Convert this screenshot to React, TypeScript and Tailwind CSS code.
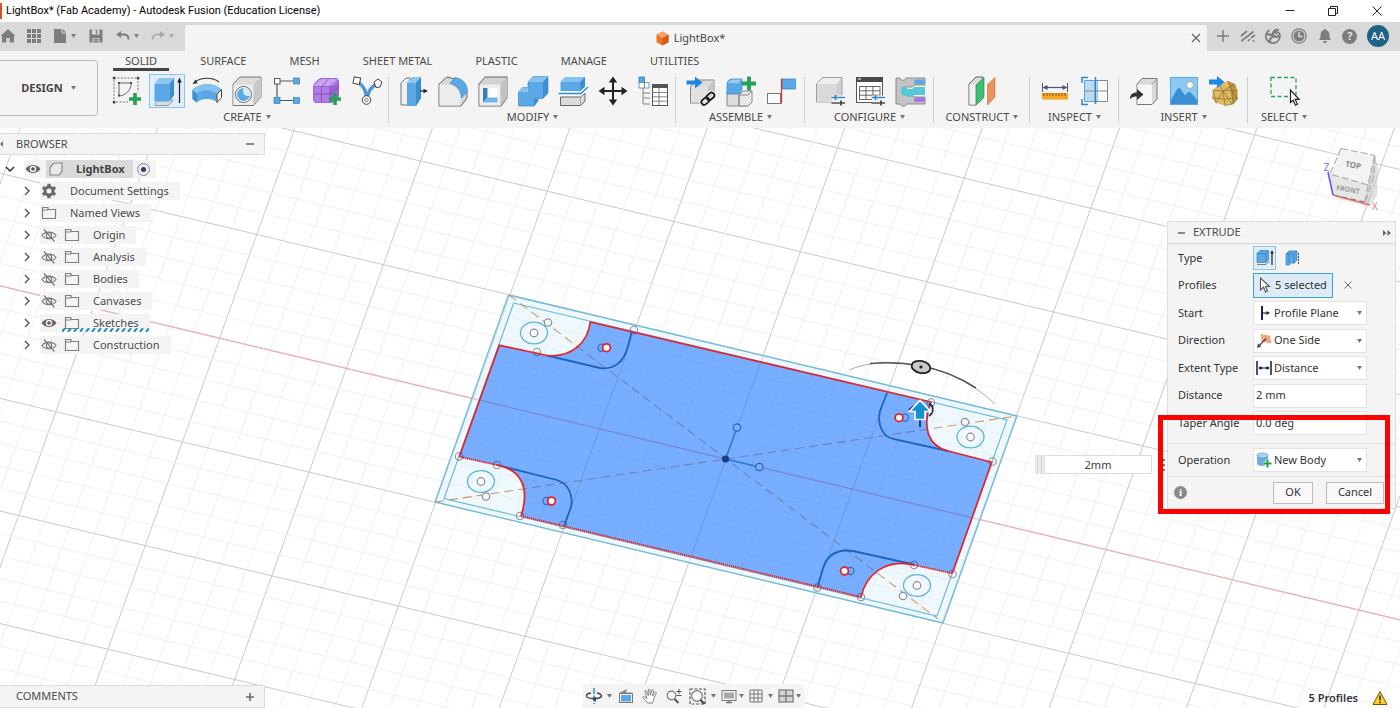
import type { ReactNode } from "react";

const BLUE = "#5aa9e6";
const BLUE_DARK = "#2f7fc0";
const LINE = "#6b6b6b";

function Caret({ className = "" }: { className?: string }) {
  return (
    <svg viewBox="0 0 5 4" className={`h-1 w-[5px] shrink-0 ${className}`} fill="currentColor" aria-hidden="true">
      <path d="M0 0h5L2.500 4z" />
    </svg>
  );
}

function Icon({ children, size = "h-8 w-8", box = "0 0 32 32" }: { children: ReactNode; size?: string; box?: string }) {
  return (
    <svg viewBox={box} className={`${size} shrink-0`} fill="none" aria-hidden="true">
      {children}
    </svg>
  );
}

/* ---------- ribbon icons ---------- */

const GreenPlus = ({ x, y }: { x: number; y: number }) => (
  <path d={`M${x - 6} ${y}h12M${x} ${y - 6}v12`} stroke="#23a455" strokeWidth="3.6" />
);

const SketchIcon = () => (
  <Icon>
    <g stroke="#666" strokeWidth=".9" strokeDasharray="2 1.4">
      <path d="M3 3h24v24H3z" />
    </g>
    <g fill="#444">
      <rect x="1.800" y="1.800" width="2.500" height="2.500" />
      <rect x="25.800" y="1.800" width="2.500" height="2.500" />
      <rect x="1.800" y="26" width="2.500" height="2.500" />
      <rect x="7" y="7" width="2" height="2" />
      <rect x="19" y="7" width="2" height="2" />
      <rect x="7" y="19.500" width="2" height="2" />
    </g>
    <path d="M8 8h12.500M8 8v13M20.500 8C20 15 15 20.500 8 21" stroke="#555" strokeWidth=".9" />
    <path d="M18 17h12v13H18z" fill="#f4f4f4" />
    <GreenPlus x={24} y={24} />
  </Icon>
);

const ExtrudeIcon = () => (
  <Icon>
    <path d="M4 29l4-4h14l-1 2-4 3.500H4z" fill="#ddd" stroke="#888" strokeWidth=".8" />
    <path d="M4 8.500L8.500 3H23v18l-4.500 6.500H4z" fill="#bfe0f6" />
    <path d="M3.500 9h15v17.500h-15z" fill={BLUE} />
    <path d="M3.500 9L8 3h15l-4.500 6z" fill="#8ac6f2" />
    <path d="M18.500 9L23 3v17l-4.500 6.500z" fill="#3c8ed2" />
    <path d="M28.500 28V5" stroke="#222" strokeWidth="1.200" />
    <path d="M28.500 2.500l2.200 5h-4.400z" fill="#222" />
  </Icon>
);

const RevolveIcon = () => (
  <Icon>
    <path d="M4 7C10 2 22 2 28 7" stroke="#333" strokeWidth="1.200" />
    <path d="M1.500 9l5.200-.8L4.500 4.500z" fill="#333" />
    <path d="M1.500 15C8 7.500 24 7.500 30.500 14.500L26 18v9c-6-4-15-4-20.500.5L1.500 24z" fill={BLUE} />
    <path d="M1.500 15C8 7.500 24 7.500 30.500 14.500L26 19C20 14 11 14 6 19z" fill="#86c2f0" />
    <path d="M6 19v8.500L1.500 24v-9z" fill="#3c8ed2" />
    <path d="M26 19l4.500-4.500v8L26 27.500z" fill="#fff" stroke="#444" strokeWidth="1" />
  </Icon>
);

const HoleIcon = () => (
  <Icon>
    <path d="M2 9l7-7h21v20l-7.500 8.500H2z" fill="#dcdcdc" stroke="#777" strokeWidth="1" />
    <path d="M2.500 9.500h20v20.500h-20z" fill="#ededed" />
    <path d="M22.500 9.500L30 2v20l-7.500 8z" fill="#c8c8c8" />
    <circle cx="12.500" cy="19.500" r="8" fill="#fff" stroke="#666" />
    <circle cx="12.500" cy="19.500" r="6.500" fill={BLUE} />
    <path d="M12.500 13a6.500 6.500 0 0 1 6.300 8c-5 .8-8-2.500-6.300-8z" fill="#d9edfb" />
  </Icon>
);

const PatternIcon = () => (
  <Icon>
    <path d="M9 6h13M6 9v13M9 25.500h13" stroke="#555" strokeWidth="1.200" />
    <rect x="3.500" y="3.500" width="5.500" height="5.500" fill="#fff" stroke="#555" />
    <rect x="22.500" y="3" width="6" height="6" fill={BLUE} stroke={BLUE_DARK} strokeWidth=".7" />
    <rect x="3" y="22.500" width="6" height="6" fill={BLUE} stroke={BLUE_DARK} strokeWidth=".7" />
    <rect x="22.500" y="22.500" width="6" height="6" fill={BLUE} stroke={BLUE_DARK} strokeWidth=".7" />
  </Icon>
);

const FormIcon = () => (
  <Icon>
    <path d="M2 12c0-3 5-9 9-9h14c2 0 3 2 3 4v13c0 3-5 8-8 8H5c-2 0-3-2-3-4z" fill="#9d63d8" />
    <path d="M3 11c1-3 5-7 9-7h13c2 0 2 1 1 3-2 2-4 4-7 4z" fill="#c9a2f0" />
    <path d="M3 12h16v15H5c-2 0-2-2-2-3z" fill="#b07ce6" />
    <path d="M10.500 12v15M3 19h16M19 12v15M19 19l9-7M19 11l8-6M10.500 12l7-8" stroke="#7d4bb5" strokeWidth=".8" />
    <GreenPlus x={24} y={24} />
  </Icon>
);

const PipeIcon = () => (
  <Icon>
    <path d="M6 6c6 5 9 8 9.500 18M27 8c-7 4-10 8-11 16" stroke="#4b97d6" strokeWidth="3.400" />
    <rect x="2.500" y="2.500" width="6.500" height="6.500" fill="#fff" stroke="#444" transform="rotate(12 6 6)" />
    <path d="M23 7l4-3 4 3-2 5-4 .5z" fill="#fff" stroke="#444" />
    <circle cx="15.500" cy="25" r="4.300" fill="#fff" stroke="#444" />
    <circle cx="15.500" cy="25" r="1.800" fill="#d0e6f8" stroke="#777" strokeWidth=".8" />
  </Icon>
);

const PressPullIcon = () => (
  <Icon>
    <path d="M4 8l5-5h4v25l-2 2H4z" fill="#f0f0f0" stroke="#777" />
    <path d="M10 8l5-6h9v21l-5 8h-9z" fill={BLUE} />
    <path d="M10 8l5-6h9l-5 6z" fill="#8ac6f2" />
    <path d="M19 8l5-6v21l-5 8z" fill="#3c8ed2" />
    <path d="M23 16h5" stroke="#222" strokeWidth="1.200" />
    <path d="M31 16l-4.500-2.300v4.600z" fill="#222" />
  </Icon>
);

const FilletIcon = () => (
  <Icon>
    <path d="M2 9l8-7 8 2c8 3 12 8 12 15v4l-6 8H2z" fill="#d7d7d7" stroke="#666" />
    <path d="M2.500 9.500H10c8 1 13 6 13.500 13v8H2.500z" fill="#ececec" />
    <path d="M13 8.500L18 2.500C26 4 30.500 9 30.500 17L24.500 23C24 15 20 10 13 8.500z" fill={BLUE} stroke={BLUE_DARK} strokeWidth=".6" />
  </Icon>
);

const ShellIcon = () => (
  <Icon>
    <path d="M2 9l6-7h22v21l-6 8H2z" fill="#d2d2d2" stroke="#666" />
    <path d="M2.500 9.500h21v21h-21z" fill="#efefef" />
    <path d="M23.500 9.500L30 2.500v20l-6.500 8z" fill="#c2c2c2" />
    <rect x="6" y="13" width="14.500" height="14.500" fill="#fff" />
    <path d="M6 13h4.500v9.500L6 27.500z" fill="#2f7fc0" />
    <path d="M6 27.500l4.500-5h10v5z" fill="#6db5ec" />
  </Icon>
);

const CombineIcon = () => (
  <Icon>
    <path d="M1.500 17l4-4.500H11V7l5-5.500h15V18l-5 5.500h-5V26l-4 5H1.500z" fill={BLUE} stroke={BLUE_DARK} strokeWidth=".6" />
    <path d="M11 7l5-5.500h15L26 7zM1.500 17l4-4.500H11V17z" fill="#86c2f0" />
    <path d="M26 7l5-5.500V18l-5 5.500zM17 23.500h4V26l-4 5z" fill="#3c8ed2" />
  </Icon>
);

const SplitIcon = () => (
  <Icon>
    <path d="M3.500 7L8 2h20v10l-4 4H3.500z" fill={BLUE} />
    <path d="M3.500 7L8 2h20l-4.500 5z" fill="#86c2f0" />
    <path d="M23.500 7L28 2v10l-4.500 4z" fill="#3c8ed2" />
    <path d="M3.500 22h20L28 18v8l-4.500 4.500h-20z" fill="#dcdcdc" stroke="#666" />
    <path d="M23.500 22v8.500" stroke="#999" strokeWidth=".8" />
    <path d="M2 18.500h22l7-6.500" stroke="#fff" strokeWidth="4" />
    <path d="M1.500 18.500H24l7-6.500" stroke="#2d86cf" strokeWidth="1.300" />
  </Icon>
);

const MoveIcon = () => (
  <Icon>
    <path d="M16 6v20M6 16h20" stroke="#222" strokeWidth="2" />
    <path d="M16 1.500l4.200 6h-8.400zM16 30.500l4.200-6h-8.400zM1.500 16l6-4.200v8.400zM30.500 16l-6-4.200v8.400z" fill="#222" />
  </Icon>
);

const ParametersIcon = () => (
  <Icon>
    <rect x="2" y="2" width="5.500" height="5.500" fill={BLUE} stroke={BLUE_DARK} strokeWidth=".8" />
    <path d="M2 7.500h5.500V13H2zM7.500 7.500H12V13H7.500z" fill="#fff" stroke="#5a7f9f" strokeWidth=".8" />
    <path d="M6 13v16h7M6 18h7M6 23h7" stroke="#777" strokeWidth=".9" />
    <rect x="15.500" y="9.500" width="15" height="21" fill="#fff" stroke="#555" />
    <path d="M15.500 9.500h15v3.500h-15z" fill="#555" />
    <path d="M15.500 17.500h15M15.500 21.800h15M15.500 26.200h15M22 13v17.500" stroke="#777" strokeWidth=".9" />
  </Icon>
);

const InsertLinkIcon = () => (
  <Icon>
    <path d="M5.500 12l5-7H29v15l-6 8H5.500z" fill="#dcdcdc" stroke="#888" />
    <path d="M6 12h17v15.500H6z" fill="#e2e2e2" />
    <path d="M23 12l6-7v15l-6 7.500z" fill="#c4c4c4" />
    <path d="M1.500 5.500H10V1.500L17.500 7.500 10 13.500V9.500H1.500z" fill="#1e88d8" />
    <g stroke="#f4f4f4" strokeWidth="4">
      <rect x="16" y="23.500" width="8.500" height="5.500" rx="2.700" transform="rotate(-40 20 26)" />
      <rect x="21.500" y="19" width="8.500" height="5.500" rx="2.700" transform="rotate(-40 25 22)" />
    </g>
    <g stroke="#222" strokeWidth="1.900">
      <rect x="16" y="23.500" width="8.500" height="5.500" rx="2.700" transform="rotate(-40 20 26)" />
      <rect x="21.500" y="19" width="8.500" height="5.500" rx="2.700" transform="rotate(-40 25 22)" />
    </g>
  </Icon>
);

const NewComponentIcon = () => (
  <Icon>
    <path d="M2 18h24v10l-4 3H2z" fill="#ddd" stroke="#888" />
    <path d="M14 20l4-4h9v11l-4 4h-9z" fill="#e8e8e8" stroke="#888" />
    <path d="M14 20v11M14 20h9l4-4" stroke="#888" />
    <path d="M2 9c0-3 3-5 5-5h10v11l-3 4H2z" fill={BLUE} stroke={BLUE_DARK} strokeWidth=".7" />
    <path d="M3 8c1-2 3-3.500 5-3.500h8.500L13 8.500z" fill="#9accf2" />
    <path d="M17 8.500h14M24 1.500v14" stroke="#23a455" strokeWidth="3.800" />
  </Icon>
);

const JointIcon = () => (
  <Icon>
    <rect x="2.500" y="18.500" width="13" height="10" fill="#fff" stroke="#777" />
    <rect x="17.500" y="4" width="13" height="10" fill={BLUE} stroke={BLUE_DARK} strokeWidth=".7" />
    <path d="M16.500 3.500v25" stroke="#d9362b" strokeWidth="1.300" />
  </Icon>
);

const Sliders = () => (
  <g>
    <path d="M18 20.500h13v9H18z" fill="#f4f4f4" />
    <path d="M17.500 22.500h13.500" stroke="#2d86cf" strokeWidth="1.400" />
    <path d="M21.500 20v5" stroke="#2d86cf" strokeWidth="1.800" />
    <path d="M17.500 28h13.500" stroke="#444" strokeWidth="1.400" />
    <path d="M27 25.500v5" stroke="#444" strokeWidth="1.800" />
  </g>
);

const ConfigureIcon = () => (
  <Icon>
    <path d="M2.500 9l6-6.500H28V20l-5 7H2.500z" fill="#cfcfcf" stroke="#999" strokeWidth=".9" />
    <path d="M3 9h19.500v18H3z" fill="#dadada" />
    <path d="M3 9l6-6h18.500l-5 6z" fill="#efefef" />
    <Sliders />
  </Icon>
);

const ConfigTableIcon = () => (
  <Icon>
    <rect x="2.500" y="2.500" width="26" height="25" fill="#fff" stroke="#555" />
    <path d="M2 2h27v5H2z" fill="#4a4a4a" />
    <path d="M4 4h3" stroke="#fff" />
    <path d="M5.500 11.500h20.500v13H5.500zM5.500 15.800h20.500M5.500 20.200h20.500M12 11.500v13M19 11.500v13" stroke="#555" strokeWidth=".9" />
    <Sliders />
  </Icon>
);

const RulesIcon = () => (
  <Icon>
    <path d="M2 3h4c0 3 6 3 6 0h19v7H20l-2 2H9v8h9l2 2h11v7H12c0 3-5 3-6 0H2z" fill="#c4c4c4" stroke="#777" strokeWidth=".8" />
    <path d="M7 12h5l2 2h4l2-2h11v8H20l-2 2h-4l-2-2H7z" fill="#55c8d6" />
    <rect x="20" y="4.500" width="11" height="4.500" rx="2.200" fill="#5aa9e6" />
    <rect x="20" y="22.500" width="11" height="4.500" rx="2.200" fill="#a874e0" />
  </Icon>
);

const ConstructIcon = () => (
  <Icon>
    <path d="M3 9l7-7h7v20l-7 8H3z" fill="#dcdcdc" stroke="#666" />
    <path d="M3.500 9.500h6v20h-6z" fill="#f2f2f2" />
    <path d="M10 10l8-7.500v20L10 30z" fill="#3fbf72" stroke="#2a7d4b" strokeWidth=".6" />
    <path d="M21.500 9.500l7.500-7v19.500l-7.500 8z" fill="#e8935a" stroke="#c0703b" strokeWidth=".6" />
  </Icon>
);

const MeasureIcon = () => (
  <Icon>
    <path d="M3.500 8v9M28.500 8v9" stroke="#56507a" strokeWidth="1" />
    <path d="M5 12.500h22" stroke="#56507a" strokeWidth="1.200" />
    <path d="M3.500 12.500l5-2.500v5zM28.500 12.500l-5-2.500v5z" fill="#56507a" />
    <rect x="3" y="18" width="26" height="6.500" fill="#f5a623" />
    <path d="M4.500 19.500h23" stroke="#7a4c00" strokeWidth="2.500" strokeDasharray="1 2" />
  </Icon>
);

const InterferenceIcon = () => (
  <Icon>
    <path d="M5.500 5.500h13v21h-13z" fill="#bcdcf5" stroke="#5aa0d8" />
    <path d="M16 5.500h12.500v21H16z" fill="#fff" fillOpacity=".4" stroke="#888" />
    <path d="M5.500 16h23" stroke="#888" />
    <path d="M16.500 2v27" stroke="#2d86cf" strokeWidth="1.500" />
    <path d="M3 8V2.500h6M3 24v5.500h6" stroke="#2d86cf" strokeWidth="1.500" />
  </Icon>
);

const InsertDeriveIcon = () => (
  <Icon>
    <path d="M9 9l5-5.500h15V24l-5 5.500H9z" fill="#d9d9d9" stroke="#777" />
    <path d="M9.500 9.500H24V29H9.500z" fill="#f6f6f6" />
    <path d="M24 9.500l5-6" stroke="#999" />
    <path d="M2 24c0-5 3-6.500 7-6.500V14l6.500 5.500L9 25v-3.500c-3 0-4.500.5-7 2.500z" fill="#333" />
  </Icon>
);

const CanvasImageIcon = () => (
  <Icon>
    <rect x="2.500" y="2.500" width="27" height="27" fill="#8ec9f3" stroke="#5aa9e6" />
    <path d="M3 25c4-7 6-12 8-12s5 7 6 7 2-3 4-3 5 4 8 8v4H3z" fill="#3c8ed2" />
    <circle cx="22" cy="10" r="3.500" fill="#fffbe0" stroke="#5b8f9c" strokeWidth=".6" />
  </Icon>
);

const InsertMeshIcon = () => (
  <Icon>
    <path d="M5 15l6-6 9-3 7 3 2.500 7v8L25 29l-8 1.500L8 28l-4-5z" fill="#ddbb62" />
    <path d="M20 6l7 3 2.500 7v8L25 29z" fill="#bd9842" />
    <g stroke="#8a6d2c" strokeWidth=".7">
      <path d="M5 15l10 1 12-7M5 15l3 13 7-12 2 14.500 8-1.500 4.500-5L24 15l-9 1 9 13M20 6l4 9 5.500 1M4 23l13 1 12.500-1M24 15l1 14M11 9l4 7" />
    </g>
    <path d="M1 4.500h8V1l7.500 6L9 13V9.500H1z" fill="#1e88e5" />
  </Icon>
);

const SelectIcon = () => (
  <Icon>
    <rect x="3" y="2.500" width="25" height="19" stroke="#2aa35a" strokeWidth="1.300" strokeDasharray="4 2.500" />
    <path d="M22.500 15v12.500l2.700-2.300 2.300 5 2-1-2.300-4.800h3.800z" fill="#fff" stroke="#222" strokeWidth="1.200" />
  </Icon>
);

type Tool = { name: string; icon: ReactNode; active?: boolean };
type Group = { label: string; width: string; tools: Tool[] };

const groups: Group[] = [
  {
    label: "CREATE",
    width: "w-[284px]",
    tools: [
      { name: "Create Sketch", icon: <SketchIcon /> },
      { name: "Extrude", icon: <ExtrudeIcon />, active: true },
      { name: "Revolve", icon: <RevolveIcon /> },
      { name: "Hole", icon: <HoleIcon /> },
      { name: "Pattern", icon: <PatternIcon /> },
      { name: "Create Form", icon: <FormIcon /> },
      { name: "Pipe", icon: <PipeIcon /> },
    ],
  },
  {
    label: "MODIFY",
    width: "w-[287px]",
    tools: [
      { name: "Press Pull", icon: <PressPullIcon /> },
      { name: "Fillet", icon: <FilletIcon /> },
      { name: "Shell", icon: <ShellIcon /> },
      { name: "Combine", icon: <CombineIcon /> },
      { name: "Split Body", icon: <SplitIcon /> },
      { name: "Move", icon: <MoveIcon /> },
      { name: "Change Parameters", icon: <ParametersIcon /> },
    ],
  },
  {
    label: "ASSEMBLE",
    width: "w-[129px]",
    tools: [
      { name: "Insert Component", icon: <InsertLinkIcon /> },
      { name: "New Component", icon: <NewComponentIcon /> },
      { name: "Joint", icon: <JointIcon /> },
    ],
  },
  {
    label: "CONFIGURE",
    width: "w-[129px]",
    tools: [
      { name: "Configure Design", icon: <ConfigureIcon /> },
      { name: "Configuration Table", icon: <ConfigTableIcon /> },
      { name: "Rules", icon: <RulesIcon /> },
    ],
  },
  { label: "CONSTRUCT", width: "w-[96px]", tools: [{ name: "Offset Plane", icon: <ConstructIcon /> }] },
  {
    label: "INSPECT",
    width: "w-[89px]",
    tools: [
      { name: "Measure", icon: <MeasureIcon /> },
      { name: "Interference", icon: <InterferenceIcon /> },
    ],
  },
  {
    label: "INSERT",
    width: "w-[129px]",
    tools: [
      { name: "Insert Derive", icon: <InsertDeriveIcon /> },
      { name: "Canvas", icon: <CanvasImageIcon /> },
      { name: "Insert Mesh", icon: <InsertMeshIcon /> },
    ],
  },
  { label: "SELECT", width: "w-[72px]", tools: [{ name: "Select", icon: <SelectIcon /> }] },
];

/* ---------- window chrome ---------- */

function TitleBar() {
  return (
    <header className="flex h-[22px] items-center bg-white text-black">
      <span className="h-4 w-[2px] bg-[#d9541e]" />
      <h1 className="pl-1 font-[Roboto,sans-serif] text-[11px]">LightBox* (Fab Academy) - Autodesk Fusion (Education License)</h1>
      <div className="ml-auto flex items-center">
        <button aria-label="Minimize" className="flex w-[43px] justify-center">
          <Icon size="h-3 w-3" box="0 0 12 12"><path d="M1.500 5.500h9" stroke="#222" /></Icon>
        </button>
        <button aria-label="Restore" className="flex w-[43px] justify-center">
          <Icon size="h-3 w-3" box="0 0 12 12">
            <path d="M1.500 3.500h7v7h-7z" stroke="#222" />
            <path d="M3.500 3.500v-2h7v7h-2" stroke="#222" />
          </Icon>
        </button>
        <button aria-label="Close window" className="flex w-[46px] justify-center">
          <Icon size="h-3 w-3" box="0 0 12 12"><path d="M1.500 1.500l9 9M10.500 1.500l-9 9" stroke="#222" /></Icon>
        </button>
      </div>
    </header>
  );
}

function TabStrip() {
  return (
    <div className="flex h-[29px] bg-[#d9d9d9] text-[#7d7d7d]">
      <div className="flex w-[185px] items-center pb-px">
        <button aria-label="Home" className="w-[18px] shrink-0">
          <Icon size="h-4 w-4" box="0 0 16 16"><path d="M8 1l7.500 7H14v6.500H9.700V10H6.300v4.500H2V8H.5z" fill="currentColor" /></Icon>
        </button>
        <button aria-label="Apps" className="ml-[9px] shrink-0">
          <Icon size="h-[14px] w-[14px]" box="0 0 14 14">
            <path d="M0 0h4v4H0zM5 0h4v4H5zM10 0h4v4h-4zM0 5h4v4H0zM5 5h4v4H5zM10 5h4v4h-4zM0 10h4v4H0zM5 10h4v4H5zM10 10h4v4h-4z" fill="currentColor" />
          </Icon>
        </button>
        <button aria-label="File" className="ml-3 flex shrink-0 items-center gap-1">
          <Icon size="h-[14px] w-[14px]" box="0 0 14 14"><path d="M1 0h7.500v4.500H13V14H1z" fill="currentColor" /><path d="M9.500 0L13 3.500H9.500z" fill="currentColor" /></Icon>
          <Caret />
        </button>
        <button aria-label="Save" className="ml-[13px] shrink-0">
          <Icon size="h-[14px] w-[14px]" box="0 0 14 14">
            <path d="M.5.500h13v13H.5z" fill="currentColor" />
            <path d="M3 .5h7.500V5.500H3zM3.500 9h7v4.500h-7z" fill="#d9d9d9" />
            <path d="M4.500 10.500h5M4.500 12.500h5M7.500 1.200v3.500" stroke="currentColor" strokeWidth="1.400" />
          </Icon>
        </button>
        <button aria-label="Undo" className="ml-[13px] flex shrink-0 items-center gap-1">
          <Icon size="h-[14px] w-[14px]" box="0 0 14 14"><path d="M2 5.500h6c3 0 4.500 2 4.500 5" stroke="currentColor" strokeWidth="1.800" /><path d="M0 5.500L5 2v7z" fill="currentColor" /></Icon>
          <Caret />
        </button>
        <button aria-label="Redo" className="ml-3 flex shrink-0 items-center gap-1 text-[#a8a8a8]">
          <Icon size="h-[14px] w-[14px]" box="0 0 14 14"><path d="M12 5.500H6c-3 0-4.500 2-4.500 5" stroke="currentColor" strokeWidth="1.600" /><path d="M14 5.500L9 2v7z" fill="currentColor" /></Icon>
          <Caret />
        </button>
      </div>
      <div className="relative mt-[3px] flex flex-1 items-center justify-center rounded-t-sm bg-[#f4f4f4] text-[#444]">
        <div className="flex items-center gap-1 pr-3 text-[11px]">
          <Icon size="h-[15px] w-[15px]" box="0 0 15 15">
            <path d="M7.500.5l6 3.200v7.500l-6 3.300-6-3.300V3.700z" fill="#ee7326" />
            <path d="M7.500.5l6 3.200-6 3.200-6-3.200z" fill="#f8a469" />
            <path d="M7.500 6.900l6-3.200v7.500l-6 3.300z" fill="#d45a12" />
          </Icon>
          <span>LightBox*</span>
        </div>
        <button aria-label="Close document" className="absolute right-[6px] top-2">
          <Icon size="h-[10px] w-[10px]" box="0 0 10 10"><path d="M1 1l8 8M9 1L1 9" stroke="#666" strokeWidth="1.200" /></Icon>
        </button>
      </div>
      <div className="flex w-[193px] items-center justify-between pb-px pl-[9px] pr-[11px]">
        <button aria-label="New tab"><Icon size="h-[14px] w-[14px]" box="0 0 14 14"><path d="M7 1v12M1 7h12" stroke="currentColor" strokeWidth="1.500" /></Icon></button>
        <button aria-label="Activity">
          <Icon size="h-4 w-4" box="0 0 16 16">
            <path d="M1 8l6-5M1.500 13L13.500 3.500M8 13l2-2" stroke="currentColor" strokeWidth="1.700" />
            <path d="M11 10l4-3" stroke="currentColor" strokeWidth="1.700" />
            <circle cx="13.500" cy="13" r="1" fill="currentColor" />
          </Icon>
        </button>
        <button aria-label="Extensions">
          <Icon size="h-4 w-4" box="0 0 16 16">
            <path d="M4.500 2A7 7 0 1 0 13.500 4" stroke="currentColor" strokeWidth="1.800" />
            <path d="M2 5.500c2 1.500 4 2 5.500.5C8.500 3.500 10 1.500 12.500 2L10.500 4.500l2 1.200M5 14c-.5-3 1-5 4-5.500M8 6.500c1.500 3 4 3 6.500 1" stroke="currentColor" strokeWidth="2.200" />
          </Icon>
        </button>
        <button aria-label="Job status">
          <Icon size="h-4 w-4" box="0 0 16 16">
            <circle cx="8" cy="8" r="7.200" stroke="currentColor" strokeWidth="1.200" />
            <circle cx="8" cy="8" r="5.500" fill="currentColor" />
            <path d="M8 4v4.500h3.500" stroke="#d9d9d9" strokeWidth="1.400" />
          </Icon>
        </button>
        <button aria-label="Notifications">
          <Icon size="h-4 w-4" box="0 0 16 16"><path d="M8 1c.8 0 1.200.5 1.200 1.200C12 3 12.500 5 12.500 8c0 2 .7 3 1.700 4H1.800c1-1 1.700-2 1.700-4 0-3 .5-5 3.300-5.800C6.800 1.500 7.200 1 8 1zM6 13h4c0 1.300-.8 2-2 2s-2-.7-2-2z" fill="currentColor" /></Icon>
        </button>
        <button aria-label="Help" className="flex h-[15px] w-[15px] items-center justify-center rounded-full bg-[#7d7d7d] text-[11px] font-bold text-[#e4e4e4]">?</button>
        <button aria-label="Account" className="flex h-[22px] w-[22px] items-center justify-center rounded-full bg-[#1f6288] text-[11px] text-white">AA</button>
      </div>
    </div>
  );
}

const workspaceTabs = ["SOLID", "SURFACE", "MESH", "SHEET METAL", "PLASTIC", "MANAGE", "UTILITIES"];

function Ribbon() {
  return (
    <div className="flex h-[77px] bg-[#f4f4f4] text-[#4a4a4a]">
      <button className="mt-[9px] flex h-[56px] w-[98px] items-center justify-center gap-2 rounded-r border border-l-0 border-[#bdbdbd] text-[11px] font-bold text-[#444]">
        DESIGN <Caret className="text-[#777]" />
      </button>
      <div className="flex min-w-0 flex-1 flex-col pl-[7px]">
        <nav className="flex h-5 gap-[19px] pl-2">
          {workspaceTabs.map((tab, i) => (
            <button
              key={tab}
              className={`flex h-5 items-center whitespace-nowrap px-3 text-[11px] ${i === 0 ? "border-b-[3px] border-[#444] pt-[3px]" : ""}`}
            >
              {tab}
            </button>
          ))}
        </nav>
        <div className="flex pt-0.5">
          {groups.map((group, i) => (
            <section key={group.label} className={`relative flex shrink-0 flex-col items-center ${group.width}`}>
              <div className="flex">
                {group.tools.map((tool) => (
                  <button
                    key={tool.name}
                    aria-label={tool.name}
                    className="flex h-9 w-10 items-center justify-center"
                  >
                    <span className={tool.active ? "-m-px border border-[#8cc4ea] bg-[#dfeefa] px-px" : ""}>{tool.icon}</span>
                  </button>
                ))}
              </div>
              <button className="flex items-center gap-1 whitespace-nowrap text-[11px] leading-4">
                {group.label} <Caret className="text-[#777]" />
              </button>
              {i < groups.length - 1 && <span className="absolute right-0 top-1 h-[46px] w-px bg-[#cfcfcf]" />}
            </section>
          ))}
        </div>
      </div>
    </div>
  );
}

/* ---------- browser tree ---------- */

const EyeIcon = ({ off = false }: { off?: boolean }) =>
  off ? (
    <Icon size="h-4 w-4" box="0 0 16 16">
      <path d="M1 8.500C4 4 12 4 15 8.500 12 12.800 4 12.800 1 8.500z" stroke="#777" strokeWidth="1.100" />
      <circle cx="8" cy="8.500" r="2.700" stroke="#777" strokeWidth="1.100" />
      <path d="M3 2.500l10.500 12" stroke="#777" strokeWidth="1.200" />
    </Icon>
  ) : (
    <Icon size="h-4 w-4" box="0 0 16 16">
      <path d="M.5 8C4 2.500 12 2.500 15.500 8 12 13.500 4 13.500.5 8z" fill="#666" />
      <circle cx="8" cy="8" r="3.200" fill="#f4f4f4" />
      <circle cx="8" cy="8" r="1.800" fill="#555" />
    </Icon>
  );

const FolderIcon = () => (
  <Icon size="h-4 w-4" box="0 0 16 16">
    <path d="M1.500 13.500v-11h5.500v2h7.500v9z" stroke="#808080" strokeWidth="1.200" />
    <path d="M2 5h5V4" stroke="#808080" />
  </Icon>
);

const GearIcon = () => (
  <Icon size="h-4 w-4" box="0 0 16 16">
    <circle cx="8" cy="8" r="4" stroke="#6b6b6b" strokeWidth="3" />
    <g stroke="#6b6b6b" strokeWidth="3.400">
      <path d="M8 .8v3M8 12.200v3M1.700 4.400l2.600 1.500M11.700 10.100l2.600 1.500M1.700 11.600l2.600-1.500M11.700 5.900l2.600-1.500" />
    </g>
  </Icon>
);

const Chevron = () => (
  <Icon size="h-[10px] w-[10px]" box="0 0 10 10"><path d="M3 1l4 4-4 4" stroke="#555" strokeWidth="1.400" /></Icon>
);

type Node = { label: string; kind: "settings" | "views" | "folder"; visible?: boolean; highlighted?: boolean };

const nodes: Node[] = [
  { label: "Document Settings", kind: "settings" },
  { label: "Named Views", kind: "views" },
  { label: "Origin", kind: "folder" },
  { label: "Analysis", kind: "folder" },
  { label: "Bodies", kind: "folder" },
  { label: "Canvases", kind: "folder" },
  { label: "Sketches", kind: "folder", visible: true, highlighted: true },
  { label: "Construction", kind: "folder" },
];

function BrowserPanel() {
  return (
    <aside className="absolute left-0 top-[5px] w-[265px] text-[11px] text-[#4c4c4c]">
      <div className="flex h-[22px] items-center justify-between border border-l-0 border-[#dcdcdc] bg-[#f4f4f4] pr-[10px]">
        <span className="flex items-center">
          <Icon size="h-[6px] w-4" box="0 0 16 6"><path d="M3 0v6L0 3z" fill="#777" /></Icon>
          BROWSER
        </span>
        <button aria-label="Collapse browser"><span className="block h-[2px] w-2 bg-[#888]" /></button>
      </div>
      <ul className="pt-[3px]">
        <li className="flex h-[22px] items-center">
          <button aria-label="Collapse LightBox" className="flex w-[24px] justify-center pr-1">
            <Icon size="h-[10px] w-[10px]" box="0 0 10 10"><path d="M1 3l4 4 4-4" stroke="#333" strokeWidth="1.500" /></Icon>
          </button>
          <span className="flex h-[18px] items-center bg-[#f4f4f4] pl-px pr-[6px]">
            <EyeIcon />
            <span className="ml-[5px] flex h-[18px] items-center bg-[#dadada] pl-[2px] pr-2 font-bold text-[#444]">
              <Icon size="h-4 w-4" box="0 0 16 16"><path d="M2 6.500L5 3C5.800 2.200 6.500 2 7.500 2H14v7.500c0 1-.3 1.600-1 2.300L11 14H2z" fill="#e8e8e8" stroke="#8a8a8a" strokeWidth="1.200" /></Icon>
              <span className="ml-3">LightBox</span>
            </span>
            <span className="ml-1 flex h-[13px] w-[13px] items-center justify-center rounded-full border border-[#888] bg-[#e4ebf5]">
              <span className="h-[5px] w-[5px] rounded-full bg-[#333f5a]" />
            </span>
          </span>
        </li>
        {nodes.map((node) => (
          <li key={node.label} className="flex h-[22px] items-center">
            <button aria-label={`Expand ${node.label}`} className="ml-[22px] mr-2"><Chevron /></button>
            <span className="flex h-[18px] items-center bg-[#f4f4f4] pl-px pr-[11px]">
              {node.kind === "settings" && <GearIcon />}
              {node.kind === "views" && <FolderIcon />}
              {node.kind === "folder" && <EyeIcon off={!node.visible} />}
              {node.kind === "folder" ? (
                <span className="relative ml-[7px] flex items-center">
                  <FolderIcon />
                  <span className="ml-[13px]">{node.label}</span>
                  {node.highlighted && (
                    <svg className="absolute -bottom-px -left-[2px] h-[4px] w-[87px]" viewBox="0 0 87 4" aria-hidden="true">
                      {Array.from({ length: 15 }, (_, k) => (
                        <path key={k} d={`M${k * 6} 3.800l3-3.600`} stroke="#1789c4" strokeWidth="2" />
                      ))}
                    </svg>
                  )}
                </span>
              ) : (
                <span className="ml-[13px]">{node.label}</span>
              )}
            </span>
          </li>
        ))}
      </ul>
    </aside>
  );
}

/* ---------- canvas scene ---------- */

const gridSteps = Array.from({ length: 111 }, (_, i) => i - 55);
const innerSteps = Array.from({ length: 31 }, (_, i) => i - 15);
const gridMatrix = "matrix(126.6 30.2 -37.2 103.7 726 459)";
const profilePath =
  "M499.300 345.300L547 355.500C572 358 588 342 590.300 322L930.700 402C922 428 928 446 948 451L991.700 462.300 952.300 573.300 914 565C885 558 866 575 861 597L521 516C530 488 522 470 497 465L459.300 456.700z";

const cornerPoints: [number, number][] = [
  [634, 330], [537, 352], [459, 456.5], [497, 465], [520, 516], [563, 525],
  [931, 402.5], [992.5, 461.5], [952.5, 574], [914, 565], [861, 597], [817.5, 587.5],
];
const guidePoints: [number, number][] = [[548, 322.5], [486, 496.5], [965, 422], [903, 596]];
const cornerHoles: [number, number][] = [[534, 333], [481, 481.5], [970.5, 437], [917, 585.5]];
const selectedHoles: [number, number, number][] = [[606.5, 347.7, -5], [551.5, 501, -5], [899, 417.7, 6], [844.5, 571, 6]];

function Scene() {
  return (
    <svg className="absolute inset-0 h-full w-full" viewBox="0 128 1400 580" preserveAspectRatio="xMidYMid slice" fill="none" role="img" aria-label="Sketch canvas">
      <defs>
        <clipPath id="profile-clip"><path d={profilePath} /></clipPath>
      </defs>
      <g transform={gridMatrix}>
        {gridSteps.map((n) => (
          <path
            key={n}
            d={`M${n / 5} -11V11M-11 ${n / 5}H11`}
            stroke={n % 5 === 0 ? "#cacaca" : "#f0f0f0"}
            strokeWidth="1"
            vectorEffect="non-scaling-stroke"
          />
        ))}
        <path d="M-11 0H11" stroke="#f8adad" strokeWidth="1.200" vectorEffect="non-scaling-stroke" />
      </g>

      <path d="M508.500 295L1017 416 943 623 435 502z" fill="#d9f0fa" fillOpacity=".42" stroke="#6bbbdd" strokeWidth="1.300" />
      <path d="M513.700 303L1007 420 937 616 444 498.500z" stroke="#6bbbdd" strokeWidth="1.200" />
      <path d="M435 502L1017 416M509 295L938 619" stroke="#c99a6c" strokeWidth="1.100" strokeDasharray="9 5" />
      {cornerPoints.map(([x, y]) => (
        <circle key={`${x}-${y}`} cx={x} cy={y} r="3.700" stroke="#8f8f8f" strokeWidth="1.100" />
      ))}

      <path d={profilePath} fill="#78aeff" />
      <g clipPath="url(#profile-clip)">
        <g transform={gridMatrix}>
          {innerSteps.map((n) => (
            <path
              key={n}
              d={`M${n / 5} -3V3M-3 ${n / 5}H3`}
              stroke={n % 5 === 0 ? "#6499e6" : "#73a8f9"}
              strokeWidth="1"
              vectorEffect="non-scaling-stroke"
            />
          ))}
          <path d="M-3 0H3" stroke="#7d88d4" strokeWidth="1.200" vectorEffect="non-scaling-stroke" />
        </g>
        <path d="M435 502L1017 416M509 295L938 619" stroke="#6d86b8" strokeWidth="1.100" strokeDasharray="9 5" />
        {cornerPoints.map(([x, y]) => (
          <circle key={`${x}-${y}`} cx={x} cy={y} r="3.700" stroke="#4d6da6" strokeWidth="1.100" />
        ))}
      </g>
      <g stroke="#1c63bd" strokeWidth="1.800">
        <path d="M632 331L628 346C624 363 613 370 600 368L547 355.500" />
        <path d="M497 465L556.700 480C570 484 573 497 571 507L564 526" />
        <path d="M887 393L880 411C877 424 882 436 893 439L948 451" />
        <path d="M817.500 587L823 568C828 553 840 549 853 551L914 564.500" />
      </g>
      <path d="M737 427.500L725.500 459 759 467" stroke="#2c77d8" strokeWidth="1.500" />
      <g stroke="#e8202a" strokeWidth="1.700">
        <path d="M459.300 456.700L499.300 345.300 547 355.500C572 358 588 342 590.300 322L930.700 402C922 428 928 446 948 451L991.700 462.300 952.300 573.300" />
        <path d="M914 565C885 558 866 575 861 597M521 516C530 488 522 470 497 465" />
      </g>
      <path d="M952.300 573.300L914 565M861 597L521 516M497 465L459.300 456.700" stroke="#e8202a" strokeWidth="1.800" strokeDasharray="1.500 .6" />

      {cornerHoles.map(([x, y]) => (
        <g key={x}>
          <ellipse cx={x} cy={y} rx="13.500" ry="10.800" stroke="#5cb4dc" strokeWidth="1.300" />
          <circle cx={x} cy={y} r="3.800" fill="#fff" stroke="#8a8a8a" strokeWidth="1.200" />
        </g>
      ))}
      {guidePoints.map(([x, y]) => (
        <circle key={x} cx={x} cy={y} r="3.700" fill="#f2fafd" stroke="#8f8f8f" strokeWidth="1.200" />
      ))}
      {selectedHoles.map(([x, y, dx]) => (
        <g key={x}>
          <circle cx={x + dx} cy={y} r="3.600" stroke="#2b6fc8" strokeWidth="1.200" />
          <circle cx={x} cy={y} r="3.900" fill="#fff" stroke="#e8202a" strokeWidth="1.800" />
        </g>
      ))}
      <g stroke="#2464b8" strokeWidth="1.200">
        <circle cx="737" cy="427.500" r="3.700" fill="#78aeff" />
        <circle cx="759.300" cy="467" r="3.700" fill="#78aeff" />
      </g>
      <circle cx="725.500" cy="459" r="3.600" fill="#153f86" />

      <path d="M849 370C870 361 895 361 921 366C950 371 976 386 995 404" stroke="#aaa" strokeWidth="1" />
      <path d="M870 363.500C887 361.800 903 362.500 921 366C944 370 962 379 976 388" stroke="#555" strokeWidth="1.500" />
      <g transform="rotate(12 921 367)">
        <ellipse cx="921" cy="367" rx="9.500" ry="6" fill="#c9c9c9" stroke="#222" strokeWidth="1.800" />
        <circle cx="921" cy="367" r="1.600" fill="#222" />
      </g>
      <path d="M909 410l5-4M909 410h5M920 419v8M929 404c5 1 5 9 0 12" stroke="#16325c" strokeWidth="1.800" />
      <path d="M920 400.500l10.500 11h-5.500v8h-10v-8h-5.500z" fill="#1393cf" stroke="#fff" strokeWidth="1.600" />
    </svg>
  );
}

function ViewCube() {
  return (
    <svg className="absolute right-[16px] top-[16px] h-[70px] w-[66px]" viewBox="1318 144 66 70" fill="none" role="img" aria-label="View cube">
      <path d="M1336 198l33 8 8-10 1-28-3-12z" fill="#b5b5b5" fillOpacity=".4" />
      <path d="M1341 148l34 7-7 30-38-10z" fill="#f3f3f3" />
      <path d="M1329 174l39 11-3 17-32-7z" fill="#e6e6e6" />
      <path d="M1368 185l7-30-1 22-9 25z" fill="#d2d2d2" />
      <path d="M1341 148.500l34 7M1341 148.500l-11 25.500 38 11 6.500-29.500M1368 185l-3 17M1375 156l-1 20-8.500 26" stroke="#b0b0b0" strokeWidth="1.200" strokeDasharray="7 3" />
      <path d="M1328 172l5 23" stroke="#5656f0" strokeWidth="1.500" />
      <path d="M1333 195l37 10" stroke="#ee6a6a" strokeWidth="1.300" />
      <path d="M1333 195l32 7" stroke="#777" strokeWidth="1" strokeDasharray="6 3" />
      <g fontFamily="'Noto Sans', sans-serif" textAnchor="middle">
        <text x="1353" y="168" fontSize="8" fontWeight="700" fill="#8a8a8a" transform="rotate(10 1353 166)">TOP</text>
        <text x="1348" y="192" fontSize="7" fontWeight="700" fill="#999" transform="rotate(10 1348 190)">FRONT</text>
        <text x="1326.500" y="171" fontSize="10" fill="#7b7bf5">Z</text>
        <text x="1375" y="210" fontSize="10" fill="#f08080">X</text>
      </g>
    </svg>
  );
}

/* ---------- extrude dialog ---------- */

const CursorIcon = () => (
  <Icon size="h-4 w-3" box="0 0 12 16"><path d="M1.500 1v12l3-2.800 2 4.800 2-1-2-4.500h4z" fill="#fff" stroke="#555" strokeWidth="1.100" /></Icon>
);
const StartIcon = () => (
  <Icon size="h-4 w-4" box="0 0 16 16"><path d="M6 1v14" stroke="#16264e" strokeWidth="2" /><path d="M7 8h5" stroke="#16264e" strokeWidth="1.200" /><path d="M14 8l-3.500-2v4z" fill="#16264e" /></Icon>
);
const DirectionIcon = () => (
  <Icon size="h-4 w-4" box="0 0 16 16">
    <path d="M5 1.500l8.500 1.500 1.500 7-9-2z" fill="#f0a878" stroke="#dd8a55" strokeWidth=".8" strokeDasharray="2 1" />
    <path d="M2.500 13.500L10 5.500" stroke="#444" strokeWidth="1.200" />
    <path d="M1 15l1-4.500 3.300 3z" fill="#444" />
  </Icon>
);
const DistanceIcon = () => (
  <Icon size="h-4 w-4" box="0 0 16 16"><path d="M1 1v14M15 1v14" stroke="#16264e" strokeWidth="1.600" /><path d="M3 8h10" stroke="#16264e" strokeWidth="1.200" /><path d="M2 8l3.500-2v4zM14 8l-3.500-2v4z" fill="#16264e" /></Icon>
);
const NewBodyIcon = () => (
  <Icon size="h-4 w-4" box="0 0 16 16">
    <path d="M1 3.500v8C1 13 3 14 6.500 14s5.500-1 5.500-2.500v-8z" fill="#6aaee0" />
    <ellipse cx="6.500" cy="3.500" rx="5.500" ry="2.500" fill="#a9d3f2" stroke="#4d93c9" strokeWidth=".7" />
    <path d="M11.500 7.500v8M7.500 11.500h8" stroke="#fff" strokeWidth="3.500" />
    <path d="M11.500 7.500v8M7.500 11.500h8" stroke="#23a43c" strokeWidth="2" />
  </Icon>
);

function Field({ label, htmlFor, children }: { label: string; htmlFor: string; children: ReactNode }) {
  return (
    <div className="flex flex-1 items-center">
      <label htmlFor={htmlFor} className="w-[75px] shrink-0 whitespace-nowrap">{label}</label>
      {children}
    </div>
  );
}

function SelectBox({ id, value, icon }: { id: string; value: string; icon: ReactNode }) {
  return (
    <div className="relative flex h-6 w-[114px] items-center border border-[#e3e3e3] bg-white">
      <span className="pointer-events-none absolute left-[2px]">{icon}</span>
      <select id={id} defaultValue={value} className="h-full w-full appearance-none bg-transparent pl-[20px] outline-none">
        <option>{value}</option>
      </select>
      <Caret className="pointer-events-none absolute right-[4px] text-[#777]" />
    </div>
  );
}

function ExtrudeDialog() {
  return (
    <section aria-label="Extrude" className="absolute right-1 top-[93px] w-[229px] border border-[#dedede] bg-[#f4f4f4] text-[11px] text-[#333]">
      <div className="flex h-[22px] items-center border-b border-[#d6d6d6] pl-[10px] pr-1 text-[#4c4c4c]">
        <button aria-label="Collapse dialog"><span className="block h-[2px] w-[7px] bg-[#888]" /></button>
        <h2 className="ml-2">EXTRUDE</h2>
        <button aria-label="Expand dialog" className="ml-auto">
          <Icon size="h-[6px] w-2" box="0 0 8 6"><path d="M0 0l3.500 3L0 6zM4.500 0L8 3 4.500 6z" fill="#666" /></Icon>
        </button>
      </div>
      <div className="flex h-[193px] flex-col pl-[10px]">
        <Field label="Type" htmlFor="type-solid">
          <button id="type-solid" aria-label="Extrude" className="flex h-6 w-[23px] items-center justify-center border border-[#8cc4ea] bg-[#dfeefa]">
            <Icon size="h-[18px] w-[18px]" box="0 0 18 18">
              <path d="M1 15.500h9l3.500-3.500" stroke="#666" strokeWidth=".8" />
              <path d="M1 4.500L4 1.500h8.500V11L10 13.500H1z" fill={BLUE} stroke={BLUE_DARK} strokeWidth=".7" />
              <path d="M10 4.500v9M1 4.500h9l2.500-3" stroke={BLUE_DARK} strokeWidth=".7" />
              <path d="M16 16V3" stroke="#222" strokeWidth="1.200" /><path d="M16 1l1.800 3.500h-3.600z" fill="#222" />
            </Icon>
          </button>
          <button aria-label="Thin extrude" className="ml-2 flex h-6 w-[16px] items-center justify-center">
            <Icon size="h-4 w-4" box="0 0 16 16">
              <path d="M2 4l3-3h8v9l-3 3.500-2.500-1-2 2.500H2z" fill={BLUE} stroke={BLUE_DARK} strokeWidth=".7" />
              <path d="M5 4v9M10 4v9M2 4h8l3-3" stroke={BLUE_DARK} strokeWidth=".7" />
              <path d="M14.500 14V2" stroke="#555" strokeDasharray="2 1" />
            </Icon>
          </button>
        </Field>
        <Field label="Profiles" htmlFor="profiles">
          <button id="profiles" className="flex h-[25px] w-[80px] items-center gap-1 whitespace-nowrap border border-[#3f9fd3] bg-[#dcebf5] pl-[5px]">
            <CursorIcon /> 5 selected
          </button>
          <button aria-label="Clear profiles" className="ml-[11px]">
            <Icon size="h-2 w-2" box="0 0 8 8"><path d="M.5.5l7 7M7.500.5l-7 7" stroke="#666" /></Icon>
          </button>
        </Field>
        <Field label="Start" htmlFor="start"><SelectBox id="start" value="Profile Plane" icon={<StartIcon />} /></Field>
        <Field label="Direction" htmlFor="direction"><SelectBox id="direction" value="One Side" icon={<DirectionIcon />} /></Field>
        <Field label="Extent Type" htmlFor="extent"><SelectBox id="extent" value="Distance" icon={<DistanceIcon />} /></Field>
        <Field label="Distance" htmlFor="distance">
          <input id="distance" defaultValue="2 mm" className="h-6 w-[114px] border border-[#e3e3e3] bg-white pb-0.5 pl-[2px] outline-none" />
        </Field>
        <Field label="Taper Angle" htmlFor="taper">
          <input id="taper" defaultValue="0.0 deg" className="h-6 w-[114px] border border-[#e3e3e3] bg-white pb-0.5 pl-[2px] outline-none" />
        </Field>
      </div>
      <div className="mt-[6px] flex h-[34px] border-y border-[#e0e0e0] pl-[10px]">
        <Field label="Operation" htmlFor="operation"><SelectBox id="operation" value="New Body" icon={<NewBodyIcon />} /></Field>
      </div>
      <div className="flex h-[31px] items-center pl-[6px] pr-[11px]">
        <button aria-label="Info" className="flex h-[13px] w-[13px] items-center justify-center rounded-full bg-[#8a8a8a] font-['Liberation_Serif',serif] text-[11px] font-bold text-white">i</button>
        <button className="ml-auto h-[22px] w-10 border border-[#bdbdbd] bg-[#f8f8f8]">OK</button>
        <button className="ml-[13px] h-[22px] w-[58px] border border-[#bdbdbd] bg-[#f8f8f8]">Cancel</button>
      </div>
      <div className="pointer-events-none absolute -left-[10px] right-[5px] top-[193px] h-[99px] border-[5px] border-[#ff0000]" />
    </section>
  );
}

/* ---------- canvas overlays ---------- */

function DistanceInput() {
  return (
    <div className="absolute right-[235px] top-[327px] flex h-[19px] items-center text-[11px] text-[#3c3c3c]">
      <span className="flex h-[19px] w-[9px] justify-center gap-[3px] bg-[#ececec]">
        <span className="w-px bg-[#d2d2d2]" /><span className="w-px bg-[#d2d2d2]" />
      </span>
      <input aria-label="Distance value" defaultValue="2mm" className="h-[19px] w-[108px] border border-[#dcdcdc] bg-white text-center outline-none" />
      <span className="ml-[11px] flex flex-col gap-[3px]">
        <span className="h-[2px] w-[2px] bg-[#777]" /><span className="h-[2px] w-[2px] bg-[#777]" /><span className="h-[2px] w-[2px] bg-[#777]" />
      </span>
    </div>
  );
}

function NavBar() {
  return (
    <nav aria-label="Navigation" className="absolute bottom-0 left-1/2 -ml-[117px] flex h-6 w-[221px] items-center bg-[#f4f4f4] pl-[2px] text-[#777]">
      <button aria-label="Orbit" className="flex items-center gap-1">
        <Icon size="h-[18px] w-[18px]" box="0 0 18 18">
          <path d="M9 1v16" stroke="#2d86cf" strokeWidth="1.500" strokeDasharray="6 1.500" />
          <path d="M6 6C2 6.500 1 8 1.500 9.500 3 12 14 12.500 16.500 9.500 17 8 15 6.500 12 6" stroke="#444" strokeWidth="1.400" />
          <path d="M11 9.500V15L7.500 12.200z" fill="#444" />
        </Icon>
        <Caret />
      </button>
      <button aria-label="Look at" className="ml-[6px]">
        <Icon size="h-4 w-4" box="0 0 16 16">
          <path d="M1 5l8-4-1 3.500h6.500V15H1z" fill="#8a8a8a" />
          <path d="M1.500 5.500h13v9h-13z" fill="#f4f4f4" stroke="#777" />
          <rect x="3" y="7" width="10" height="6.500" fill={BLUE} />
        </Icon>
      </button>
      <button aria-label="Pan" className="ml-2">
        <Icon size="h-4 w-4" box="0 0 16 16">
          <path d="M5.500 15c-1-2-3-3.500-4.500-5.500-.5-1 .8-1.500 1.500-.8L5 10.500 3 3.500c-.2-1.200 1.200-1.500 1.600-.4L6.300 7.500 6.300 2c0-1.200 1.500-1.200 1.600 0l.5 5.300L9.800 2.200c.3-1.100 1.700-.8 1.600.4l-.8 5.400 2.300-3.500c.6-.9 1.900-.3 1.400.8L12 10c-.3 2-.8 3.500-1.500 5z" fill="#fff" stroke="#777" strokeWidth=".9" />
        </Icon>
      </button>
      <button aria-label="Zoom" className="ml-2">
        <Icon size="h-4 w-4" box="0 0 16 16">
          <circle cx="5.500" cy="7.500" r="4.300" stroke="#777" strokeWidth="1.200" />
          <path d="M8.500 11l4 4" stroke="#555" strokeWidth="2" />
          <path d="M13 1v5M10.500 3.500h5M10.500 7.500h5" stroke="#555" />
        </Icon>
      </button>
      <button aria-label="Zoom window" className="ml-[7px] flex items-center gap-[5px]">
        <Icon size="h-[17px] w-[17px]" box="0 0 17 17">
          <path d="M1 1h15v15H1z" stroke="#555" strokeWidth="1.200" strokeDasharray="3 1.500" />
          <circle cx="8" cy="8" r="5.300" fill="#fff" stroke="#777" strokeWidth="1.200" />
          <path d="M11.500 12l4 4" stroke="#444" strokeWidth="2" />
        </Icon>
        <Caret />
      </button>
      <button aria-label="Display settings" className="ml-[5px] flex items-center gap-[2px]">
        <Icon size="h-4 w-4" box="0 0 16 16">
          <rect x="1" y="2.500" width="14" height="10" fill="#f4f4f4" stroke="#777" />
          <rect x="3" y="4.500" width="10" height="6" fill="#a8a8a8" />
          <path d="M5 14.500h6M8 12.500v2" stroke="#777" strokeWidth="1.400" />
        </Icon>
        <Caret />
      </button>
      <button aria-label="Grid and snaps" className="ml-[5px] flex items-center gap-[5px]">
        <Icon size="h-[14px] w-[14px]" box="0 0 14 14"><path d="M1 1h12v12H1zM1 5h12M1 9h12M5 1v12M9 1v12" stroke="#777" /></Icon>
        <Caret />
      </button>
      <button aria-label="Viewports" className="ml-[5px] flex items-center gap-[2px]">
        <Icon size="h-4 w-4" box="0 0 16 16">
          <rect x="1" y="2" width="14" height="12" fill="#d6d6d6" stroke="#777" strokeWidth="1.200" />
          <path d="M8 2v12M1 8h14" stroke="#777" strokeWidth="1.400" />
        </Icon>
        <Caret />
      </button>
    </nav>
  );
}

export default function App() {
  return (
    <div className="flex h-screen flex-col overflow-hidden bg-white font-['Noto_Sans',sans-serif]">
      <TitleBar />
      <TabStrip />
      <Ribbon />
      <main className="relative min-h-0 flex-1 overflow-hidden">
        <Scene />
        <ViewCube />
        <BrowserPanel />
        <DistanceInput />
        <ExtrudeDialog />
        <div className="absolute bottom-0 left-0 flex h-[23px] w-[265px] items-center justify-between border border-l-0 border-[#dcdcdc] bg-[#f4f4f4] pl-4 pr-[10px] text-[11px] text-[#4c4c4c]">
          <span>COMMENTS</span>
          <button aria-label="Add comment"><Icon size="h-2 w-2" box="0 0 8 8"><path d="M4 0v8M0 4h8" stroke={LINE} strokeWidth="1.600" /></Icon></button>
        </div>
        <NavBar />
        <div className="absolute bottom-[2px] right-3 flex items-center gap-[14px] text-[11px] font-semibold text-[#333]">
          5 Profiles
          <Icon size="h-4 w-4" box="0 0 16 16">
            <path d="M8 1.500l7 13H1z" fill="#ffcf1a" stroke="#6b5a10" strokeLinejoin="round" />
            <path d="M8 5.500v5M8 11.700v1.500" stroke="#222" strokeWidth="1.500" />
          </Icon>
        </div>
      </main>
    </div>
  );
}
